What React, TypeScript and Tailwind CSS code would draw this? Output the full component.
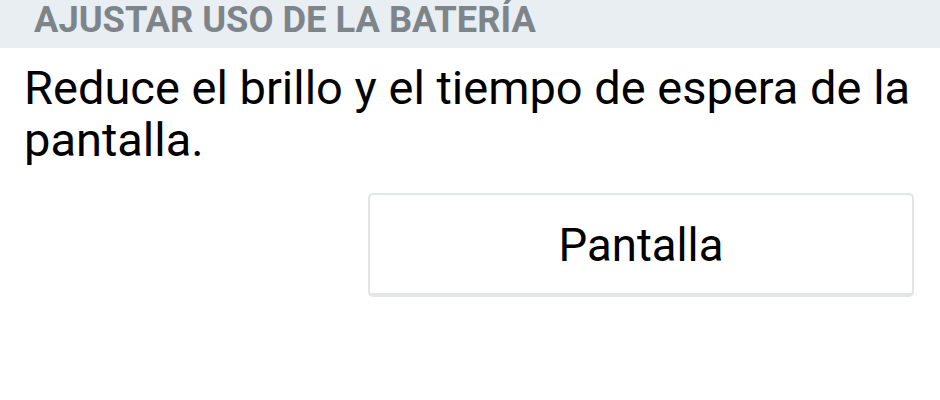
export default function App() {
  return (
    <div className="w-[940px] h-[400px] bg-white overflow-hidden" style={{ fontFamily: "Roboto, 'Noto Sans', sans-serif" }}>
      <div className="h-[48px] bg-[#e8eef1] pl-[34px]">
        <span className="block text-[36.3px] font-bold text-[#7d858a] leading-[40px]">AJUSTAR USO DE LA BATERÍA</span>
      </div>
      <div className="pl-[24px] pr-[20px] pt-[14px] text-[47px] leading-[52px] text-black">
        Reduce el brillo y el tiempo de espera de la pantalla.
      </div>
      <div className="flex justify-end pr-[26px] mt-[27px]">
        <button className="w-[546px] h-[104px] rounded-[5px] border-2 border-[#e2e6e7] border-b-4 bg-white pt-[5px] text-[45.5px] text-black">
          Pantalla
        </button>
      </div>
    </div>
  );
}
